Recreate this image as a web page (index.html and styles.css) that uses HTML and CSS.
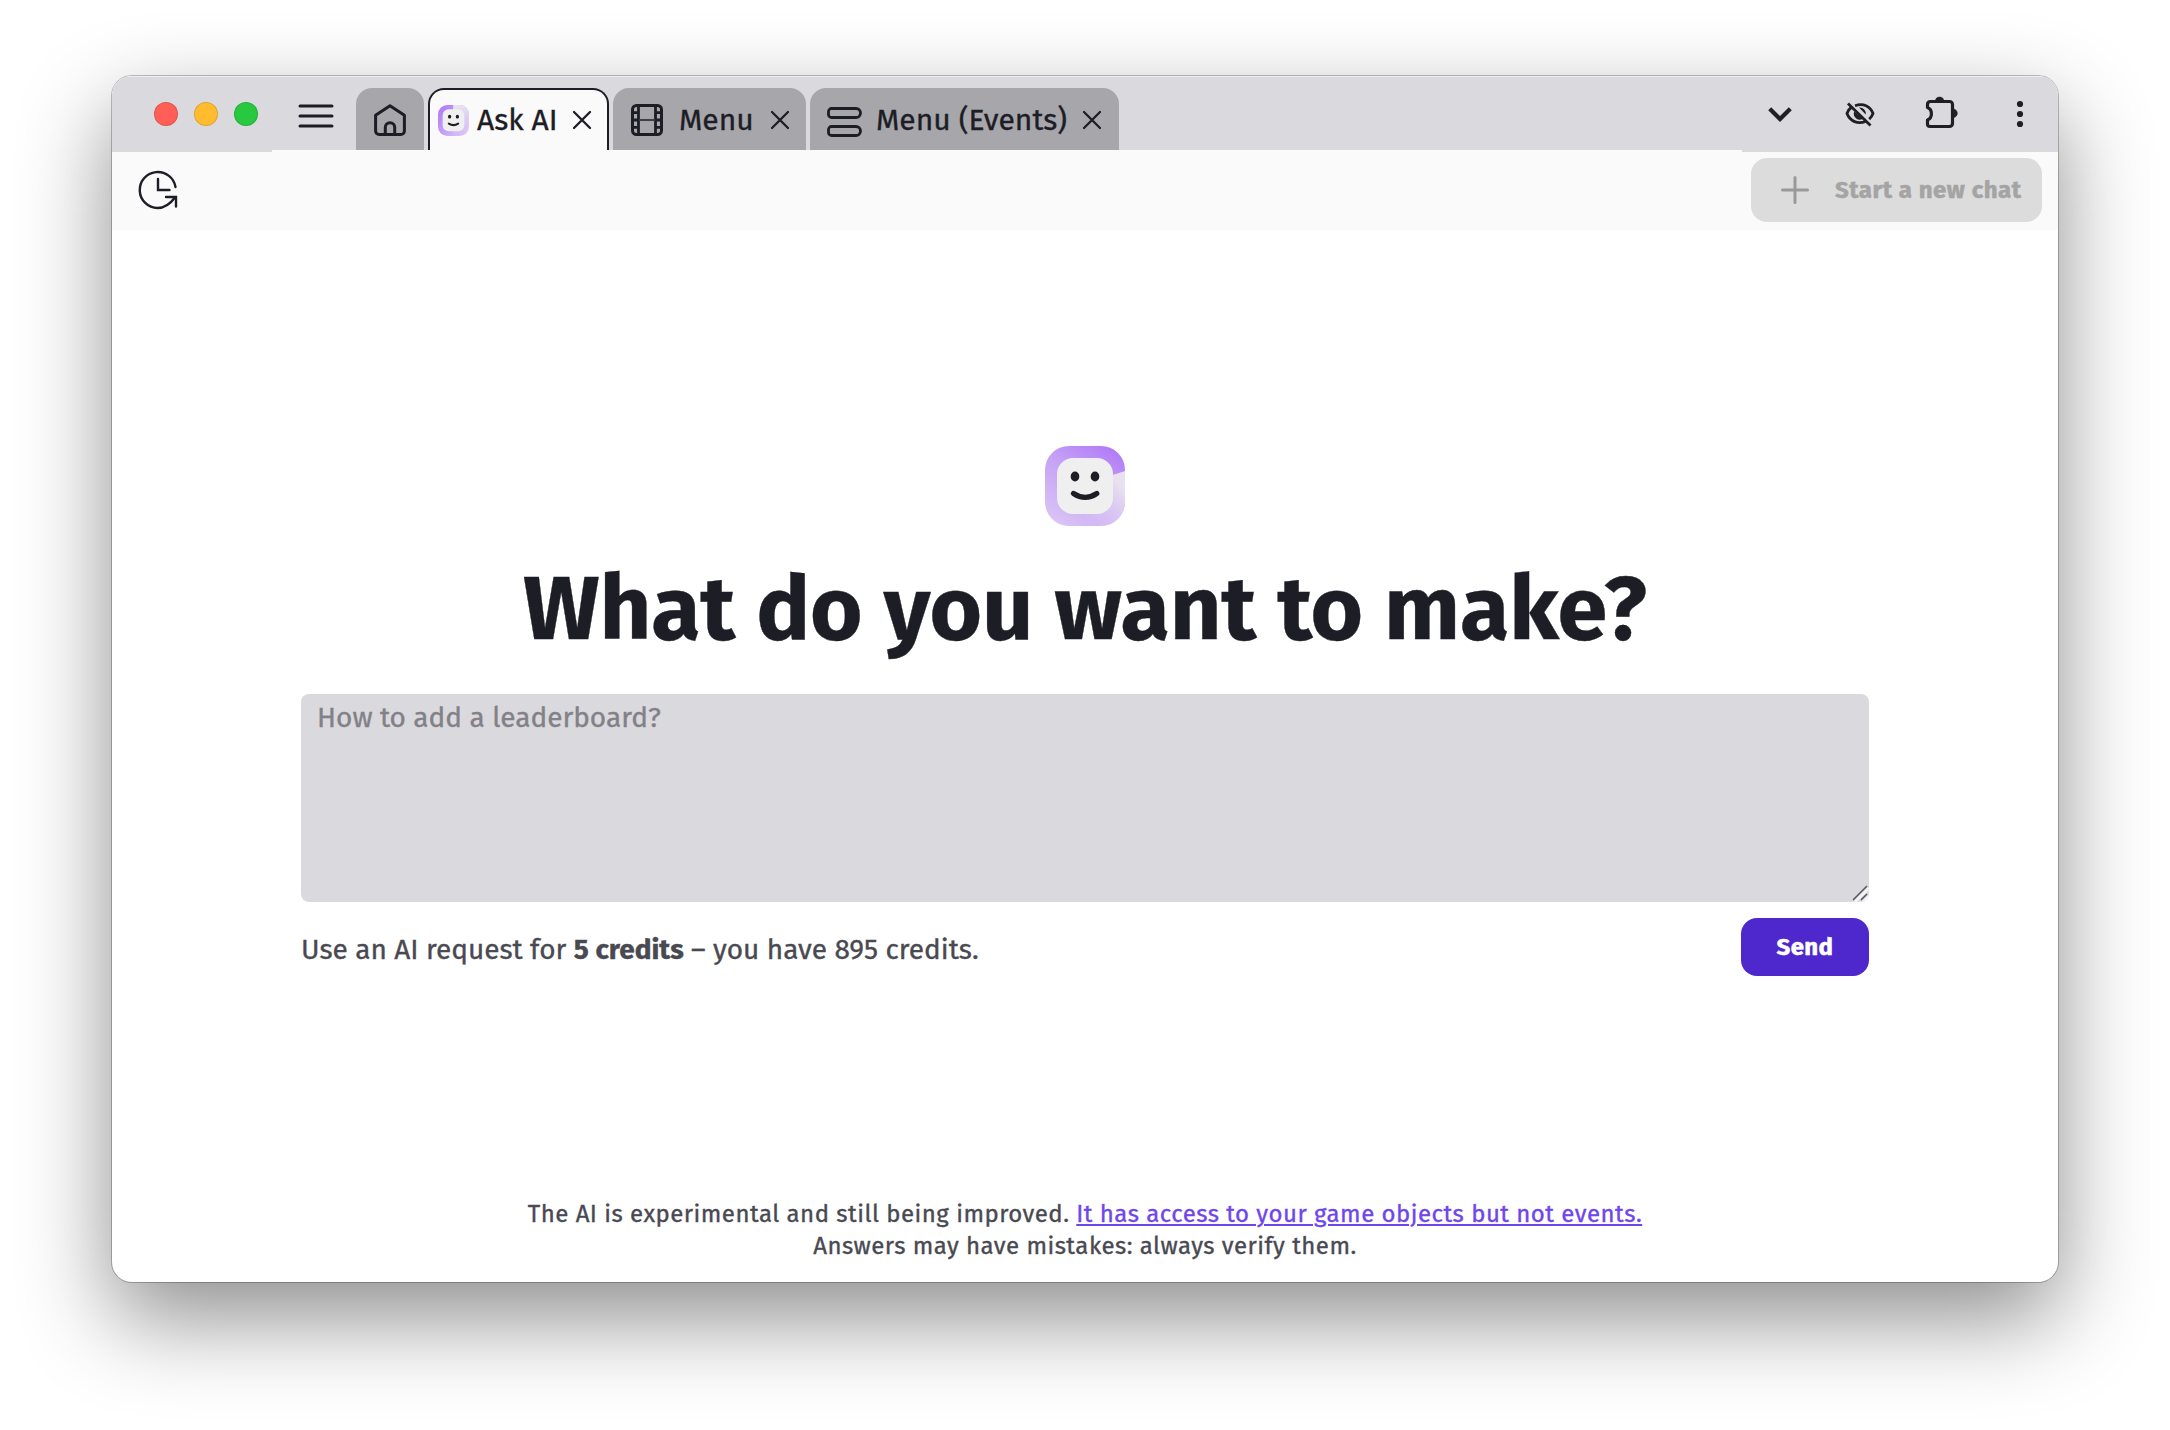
FILE: index.html
```html
<!DOCTYPE html>
<html lang="en">
<head>
<meta charset="utf-8">
<title>Ask AI</title>
<link rel="stylesheet" href="styles.css">
</head>
<body>
<svg class="defs" width="0" height="0" aria-hidden="true">
  <defs>
    <linearGradient id="ring" x1="0.85" y1="0" x2="0.25" y2="1">
      <stop offset="0" stop-color="#b079f7"/>
      <stop offset="0.45" stop-color="#c6a2f6"/>
      <stop offset="1" stop-color="#d9c2f5"/>
    </linearGradient>
    <linearGradient id="tail" gradientUnits="userSpaceOnUse" x1="78" y1="42" x2="46" y2="78">
      <stop offset="0" stop-color="#e8e2f0"/>
      <stop offset="1" stop-color="#e8e2f0" stop-opacity="0"/>
    </linearGradient>
    <linearGradient id="ring-small" x1="0" y1="0.1" x2="1" y2="0.9">
      <stop offset="0" stop-color="#b079f7"/>
      <stop offset="1" stop-color="#dcc8f6"/>
    </linearGradient>
    <linearGradient id="tail-small" gradientUnits="userSpaceOnUse" x1="50" y1="5" x2="66" y2="78">
      <stop offset="0" stop-color="#e8e3ee"/>
      <stop offset="1" stop-color="#e8e3ee" stop-opacity="0"/>
    </linearGradient>
    <symbol id="close" viewBox="0 0 20 20">
      <path d="M2 2 18 18M18 2 2 18" fill="none" stroke="#1d1d26" stroke-width="2.300" stroke-linecap="round"/>
    </symbol>
  </defs>
</svg>
<div class="window">
  <header class="titlebar">
    <div class="lights">
      <span class="light light-red"></span>
      <span class="light light-yellow"></span>
      <span class="light light-green"></span>
    </div>
    <nav class="tabs">
      <svg class="burger" viewBox="0 0 36 24"><path d="M2 2h32M2 12h32M2 22h32" stroke="#1d1d26" stroke-width="3" stroke-linecap="round"/></svg>
      <div class="tab tab-home">
        <svg width="32" height="32" viewBox="0 0 32 32" fill="none" stroke="#1d1d26" stroke-width="3" stroke-linejoin="round" stroke-linecap="round"><path d="M1.6 11.3 16 1.7l14.400 9.600V27a3.500 3.500 0 0 1-3.500 3.500H5.100A3.500 3.500 0 0 1 1.600 27Z"/><path d="M11.300 30v-6.500a4.700 4.700 0 0 1 9.400 0V30"/></svg>
      </div>
      <div class="tab tab-active">
        <svg width="31" height="31" viewBox="0 0 80 80"><rect width="80" height="80" rx="24" fill="url(#ring-small)"/><path d="M39 0H56A24 24 0 0 1 80 24V56A24 24 0 0 1 56 80H39Z" fill="url(#tail-small)"/><rect x="12" y="11" width="56" height="57" rx="16" fill="#efefef"/><ellipse cx="30" cy="30" rx="4.200" ry="4.800" fill="#1d1d26"/><ellipse cx="50" cy="30" rx="4.200" ry="4.800" fill="#1d1d26"/><path d="M28 48q12 7.500 24 0" fill="none" stroke="#1d1d26" stroke-width="5.500" stroke-linecap="round"/></svg>
        <span class="tab-label">Ask AI</span>
        <svg class="close"><use href="#close"/></svg>
      </div>
      <div class="tab tab-menu">
        <svg width="32" height="32" viewBox="0 0 32 32" fill="none" stroke="#1d1d26"><rect x="1.500" y="1.500" width="29" height="29" rx="4" stroke-width="3"/><path d="M7.500 2v28M24.500 2v28M1 8.700h6M1 16h6M1 23.300h6M25 8.700h6M25 16h6M25 23.300h6" stroke-width="2.800"/><path d="M8 16h16" stroke-width="2" stroke="#3f3f48"/></svg>
        <span class="tab-label">Menu</span>
        <svg class="close"><use href="#close"/></svg>
      </div>
      <div class="tab tab-events">
        <svg width="36" height="30" viewBox="0 0 36 30" fill="none" stroke="#1d1d26" stroke-width="2.800"><path d="M4.500 1.500H29a4.500 4.500 0 0 1 0 9H4.500a3 3 0 0 1-3-3v-3a3 3 0 0 1 3-3Z"/><path d="M4.500 19.500H29a4.500 4.500 0 0 1 0 9H4.500a3 3 0 0 1-3-3v-3a3 3 0 0 1 3-3Z"/></svg>
        <span class="tab-label">Menu (Events)</span>
        <svg class="close"><use href="#close"/></svg>
      </div>
    </nav>
    <div class="actions">
      <svg viewBox="0 0 40 40" fill="none" stroke="#1f1f25"><path d="m9.700 14.700 10.300 10.300 10.300-10.300" stroke-width="4.200"/></svg>
      <svg viewBox="0 0 40 40" fill="none" stroke="#1f1f25" stroke-width="2.800"><path d="M15 11.700C23 8.700 30.500 12 33 19.500c-.8 2.200-2 4.100-3.800 5.600"/><path d="M11.700 13C9.500 14.600 7.900 16.700 7 19.500 10 27.500 18 30.500 25.500 27.500"/><path d="M14.200 17.500a6 6 0 0 0 8.600 7.300ZM19 13.600a6 6 0 0 1 6.700 6.900Z" fill="#1f1f25" stroke="none"/><path d="M8 9.500 30.500 31.500" stroke-width="2.800"/></svg>
      <svg viewBox="0 0 40 40"><path d="M7.500 10.500a3 3 0 0 1 2.500-3H29.500a3 3 0 0 1 3 3V29.500a3 3 0 0 1-3 3H10a2.500 2.500 0 0 1-2.500-2.500V25.900C12.700 24 12.700 15.500 7.500 13.600Z" fill="none" stroke="#1f1f25" stroke-width="3.200" stroke-linejoin="round"/><path d="M15.500 7.200a4.100 4.100 0 0 1 8.200 0ZM33 15a4.300 4.300 0 0 1 0 8.600Z" fill="#1f1f25" stroke="#1f1f25" stroke-width=".6"/></svg>
      <svg viewBox="0 0 40 40" fill="#1f1f25"><circle cx="20" cy="10" r="3.100"/><circle cx="20" cy="20" r="3.100"/><circle cx="20" cy="30" r="3.100"/></svg>
    </div>
  </header>
  <div class="toolbar">
    <svg width="40" height="40" viewBox="0 0 40 40" fill="none" stroke="#1d1d26" stroke-width="2.400" stroke-linecap="round"><path d="M37.500 17A18 18 0 1 0 19.500 38c7.500 0 13-4.500 17.500-10.500"/><path d="M20 9v11h11.500M28 27h10v9.500"/></svg>
    <button class="new-chat" disabled>
      <svg width="28" height="28" viewBox="0 0 28 28" stroke="#000" stroke-opacity=".3" stroke-width="3" stroke-linecap="round"><path d="M14 1.500v25M1.500 14h25"/></svg>
      <span>Start a new chat</span>
    </button>
  </div>
  <main class="content">
    <svg class="logo" width="80" height="80" viewBox="0 0 80 80"><rect width="80" height="80" rx="24" fill="url(#ring)"/><path d="M80 25V56A24 24 0 0 1 56 80H36L40 38Z" fill="url(#tail)"/><rect x="12" y="12" width="56" height="56" rx="16" fill="#efefef"/><ellipse cx="30" cy="30.500" rx="4.300" ry="4.900" fill="#1d1d26"/><ellipse cx="50" cy="30.500" rx="4.300" ry="4.900" fill="#1d1d26"/><path d="M28.500 47.500q11.700 7.800 23.300 0" fill="none" stroke="#1d1d26" stroke-width="5.200" stroke-linecap="round"/></svg>
    <h1>What do you want to make?</h1>
    <div class="prompt">
      <textarea placeholder="How to add a leaderboard?"></textarea>
      <svg class="grip" width="18" height="18" viewBox="0 0 18 18" stroke-width="1.500"><path d="M4 18 18 4M12 18l6-6" stroke="#f4f4f6" stroke-width="2.500"/><path d="M2 16 16 2M10 16l6-6" stroke="#55555c"/></svg>
    </div>
    <div class="submit">
      <p>Use an AI request for <b>5 credits</b> – you have 895 credits.</p>
      <button class="send">Send</button>
    </div>
  </main>
  <footer>
    <p>The AI is experimental and still being improved. <a href="#">It has access to your game objects but not events.</a></p>
    <p>Answers may have mistakes: always verify them.</p>
  </footer>
</div>
</body>
</html>
```
FILE: styles.css
```css
* { box-sizing: border-box; }
body {
  margin: 0;
  padding: 76px 112px 0;
  height: 1430px;
  overflow: hidden;
  background: #fff;
  color: #494952;
  font-family: "Fira Sans", "Noto Sans", sans-serif;
  -webkit-text-stroke: .35px;
}
p, h1 { margin: 0; }
svg { display: block; flex: none; }
button { border: 0; font-family: inherit; font-weight: 700; font-size: 24px; -webkit-text-stroke: .5px; }
.defs { position: absolute; }
.window {
  display: flex;
  flex-direction: column;
  width: 1946px;
  height: 1206px;
  border-radius: 20px;
  background: #fff;
  box-shadow: 0 0 0 1px rgba(0, 0, 0, .24), 0 36px 92px rgba(0, 0, 0, .45);
  overflow: hidden;
}
.titlebar {
  display: flex;
  height: 76px;
  background: #fafafa;
}
.lights, .tabs, .actions { background: #dad9de; box-shadow: inset 0 1px #efeff1; }
.lights { display: flex; gap: 16px; width: 160px; padding: 26px 0 0 42px; }
.light { width: 24px; height: 24px; border-radius: 50%; border: 1px solid rgba(0, 0, 0, .12); }
.light-red { background: #ff5f57; }
.light-yellow { background: #febc2e; }
.light-green { background: #28c840; }
.tabs { display: flex; gap: 4px; flex: 1; height: 74px; padding: 12px 0 0 26px; }
.burger { width: 36px; height: 24px; margin: 16px 18px 0 0; }
.tab {
  display: flex;
  align-items: center;
  height: 62px;
  border-radius: 16px 16px 0 0;
  background: #a7a6ab;
  color: #1d1d26;
}
.tab-label { font-size: 30px; line-height: 36px; white-space: nowrap; }
.close { width: 20px; height: 20px; margin-left: auto; }
.tab-home { width: 68px; justify-content: center; padding-top: 2px; }
.tab-active { width: 181px; padding: 0 15px 0 8px; gap: 8px; background: #fafafa; border: 2px solid #1d1d26; border-bottom: 0; }
.tab-menu { width: 193px; padding: 2px 18px 0 18px; gap: 16px; }
.tab-events { width: 309px; padding: 2px 17px 0 17px; gap: 13px; }
.tab-events > svg:first-child { margin-top: 4px; }
.actions { display: flex; width: 316px; padding: 18px 0 0 18px; gap: 40px; }
.actions svg { width: 40px; height: 40px; }
.toolbar {
  display: flex;
  justify-content: space-between;
  align-items: flex-start;
  height: 78px;
  padding: 6px 16px 0 26px;
  background: #fafafa;
}
.toolbar > svg { margin-top: 12px; }
.new-chat {
  display: flex;
  align-items: center;
  width: 291px;
  height: 64px;
  padding: 0 0 0 30px;
  gap: 26px;
  border-radius: 16px;
  background: #dcdcdc;
  color: #a4a4a4;
  letter-spacing: .55px;
  white-space: nowrap;
}
.content { display: flex; flex-direction: column; align-items: center; padding: 216px 189px 0; }
h1 {
  margin: 29px 0 31px;
  font-size: 90px;
  line-height: 108px;
  font-weight: 700;
  letter-spacing: -.12px;
  color: #1d1d26;
  white-space: nowrap;
}
.prompt { position: relative; width: 1568px; height: 208px; }
textarea {
  display: block;
  width: 100%;
  height: 100%;
  padding: 7px 16px;
  border: 0;
  border-radius: 8px;
  background: #dad9de;
  font: 400 28px/34px "Fira Sans", "Noto Sans", sans-serif;
  -webkit-text-stroke: .35px;
  resize: none;
}
textarea::placeholder { color: #828187; }
.grip { position: absolute; right: 0; bottom: 0; }
.submit { display: flex; justify-content: space-between; width: 1568px; margin-top: 16px; }
.submit p { padding-top: 15px; font-size: 28px; line-height: 34px; white-space: nowrap; }
.send { width: 128px; height: 58px; border-radius: 16px; background: #4f28cd; color: #fff; letter-spacing: .4px; padding: 0; }
footer { margin-top: auto; padding-bottom: 20px; text-align: center; font-size: 24px; line-height: 32px; letter-spacing: .48px; }
footer a { color: #7046ec; text-decoration-thickness: 2px; text-underline-offset: 2px; }
```
